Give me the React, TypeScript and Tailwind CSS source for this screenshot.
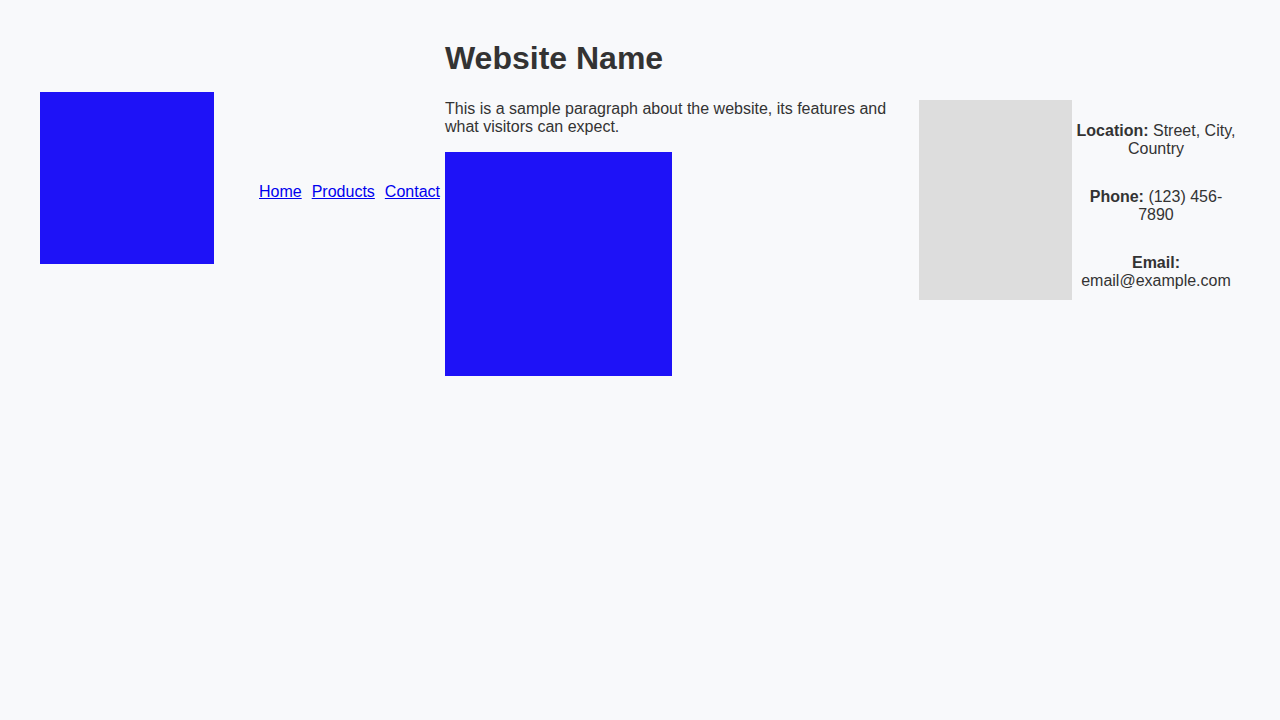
import React from 'react';

const links = ['Home', 'Products', 'Contact'];

const contact = [
  { label: 'Location:', value: 'Street, City, Country' },
  { label: 'Phone:', value: '(123) 456-7890' },
  { label: 'Email:', value: 'email@example.com' },
];

const App = (): React.ReactElement => {
  return (
    <div
      className="min-h-[720px] w-full bg-[#f8f9fb] text-[#333333] flex items-start pl-10"
      style={{ fontFamily: '"Liberation Sans", Arial, sans-serif' }}
    >
      <header className="flex items-start">
        <div className="mt-[92px] w-[174px] h-[172px] bg-[#1e12f7]" />
        <nav className="ml-[45px] mt-[183px] flex gap-[10px] text-base leading-[18px]">
          {links.map((link) => (
            <a key={link} href="#" className="text-[#0000ee] underline">
              {link}
            </a>
          ))}
        </nav>
      </header>

      <main className="ml-[5px] mt-10 w-[450px]">
        <h1 className="text-[32px] font-bold leading-[37px]">Website Name</h1>
        <p className="mt-[23px] text-base leading-[18px]">
          This is a sample paragraph about the website, its features and what visitors can expect.
        </p>
        <div className="mt-4 w-[227px] h-[224px] bg-[#1e12f7]" />
      </main>

      <aside className="ml-6 flex items-start">
        <div className="mt-[100px] w-[153px] h-[200px] bg-[#dddddd]" />
        <div className="mt-[122px] w-[168px] flex flex-col gap-[30px] text-center text-base leading-[18px]">
          {contact.map((item) => (
            <p key={item.label}>
              <strong className="font-bold">{item.label}</strong> {item.value}
            </p>
          ))}
        </div>
      </aside>
    </div>
  );
};

export default App;
